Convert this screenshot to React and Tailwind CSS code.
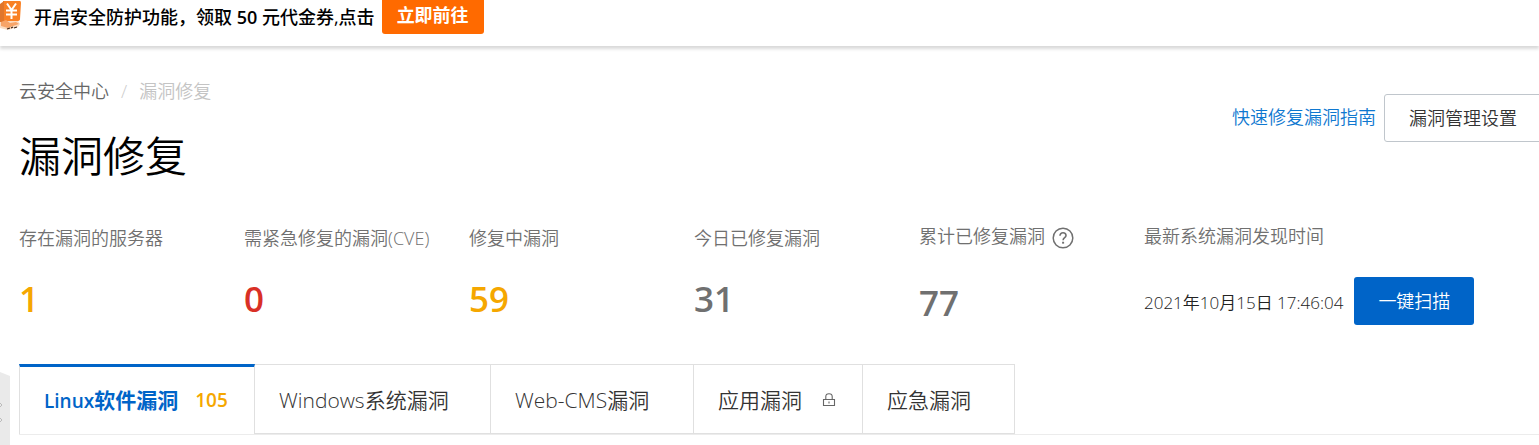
import { clsx } from "clsx";

const STATS = [
  { label: "存在漏洞的服务器", value: 1, tone: "text-[#f5a700]" },
  { label: "需紧急修复的漏洞(CVE)", value: 0, tone: "text-[#d93026]" },
  { label: "修复中漏洞", value: 59, tone: "text-[#f5a700]" },
  { label: "今日已修复漏洞", value: 31, tone: "text-[#707070]" },
];

const TABS = [
  { prefix: "Linux", label: "软件漏洞", count: 105, active: true, width: "w-[236px]" },
  { prefix: "Windows", label: "系统漏洞", width: "w-[236px]" },
  { prefix: "Web-CMS", label: "漏洞", width: "w-[203px]" },
  { label: "应用漏洞", locked: true, width: "w-[169px]" },
  { label: "应急漏洞", width: "w-[152px]" },
];

function CouponIcon() {
  return (
    <svg className="h-8 w-[22px] shrink-0" viewBox="0 0 22 32" aria-hidden="true">
      <path d="M0 20 L18 21 L20 24 L18 27 L8 30 L0 28 Z" fill="#fbdcc2" />
      <path d="M3 1 H20 Q21 1 21 3 L20 19 Q20 21 17 21 H3 Z" fill="#f98125" />
      <path d="M0 4 L4 1 V22 L0 22 Z" fill="#e0762c" />
      <path d="M1 22 L6 20 L10 23 L16 22 L19 24 L13 26 L8 28 L1 26 Z" fill="#f7a468" />
      <path d="M7 3.5 L11.5 10 L16 3.5 M11.5 9 V19 M6 10.5 H17 M6 14.5 H17" stroke="#fff" strokeWidth="2" fill="none" />
      <path d="M7 29 L10 28 M11 28 L13 27 M14 28 L17 27" stroke="#3c2415" strokeWidth="1.2" />
    </svg>
  );
}

function HelpIcon() {
  return (
    <svg className="h-[22px] w-[22px]" viewBox="0 0 22 22" fill="none" stroke="#707070" aria-hidden="true">
      <circle cx="11" cy="11" r="9.8" strokeWidth="1.5" />
      <path d="M8 8.8 C8 6.9 9.2 5.8 11 5.8 C12.8 5.8 14 6.9 14 8.5 C14 10.7 11.1 10.6 11.1 13.2" strokeWidth="1.6" />
      <path d="M10.1 15.7 H12.1" strokeWidth="1.9" />
    </svg>
  );
}

function LockIcon() {
  return (
    <svg className="h-4 w-[14px]" viewBox="0 0 14 16" fill="none" stroke="#666" strokeWidth="1.1" aria-label="未开通">
      <path d="M1.5 6.5 H12.5 V12.5 H1.5 Z" />
      <path d="M3.8 6.5 V3.5 C3.8 1.7 5 0.7 7 0.7 C9 0.7 10.2 1.7 10.2 3.5 V6.5 M7 8.5 V10.5" />
    </svg>
  );
}

function PromoBar() {
  return (
    <header className="flex h-[46px] items-start bg-white shadow-[0_3px_3px_0_rgba(0,0,0,0.15)]">
      <CouponIcon />
      <p className="ml-3 text-lg leading-[34px] font-medium text-black">
        开启安全防护功能，领取 <b className="font-semibold">50</b> 元代金券,点击
      </p>
      <button type="button" className="ml-[7px] h-[34px] rounded-b-[3px] bg-[#ff6a00] px-[15px] pb-1 text-lg leading-[30px] font-bold text-white">
        立即前往
      </button>
    </header>
  );
}

function PageHeader() {
  return (
    <div className="flex items-start justify-between">
      <div>
        <nav aria-label="面包屑" className="flex text-lg leading-6 font-[350] text-[#666]">
          <a href="#home">云安全中心</a>
          <span className="mx-3 text-[#ccc]">/</span>
          <span className="text-[#c4c4c4]">漏洞修复</span>
        </nav>
        <h1 className="mt-5 text-[42px] leading-[66px] font-[350] text-black">漏洞修复</h1>
      </div>
      <div className="-mr-[3px] flex items-center gap-2 pt-[15px]">
        <a href="#guide" className="pb-[2px] text-lg font-[350] text-[#0f78d0]">快速修复漏洞指南</a>
        <button type="button" className="h-12 rounded-[3px] border border-[#c0c6cc] px-6 text-lg font-[350] text-[#333]">
          漏洞管理设置
        </button>
      </div>
    </div>
  );
}

function StatRow() {
  const label = "flex items-center text-lg font-[350] whitespace-nowrap text-[#707070]";
  const value = "flex h-12 items-center text-[35px] font-semibold";
  return (
    <dl className="mt-[31px] grid grid-cols-[repeat(5,225px)_1fr]">
      {STATS.map((s) => (
        <div key={s.label}>
          <dt className={clsx(label, "h-9")}>{s.label}</dt>
          <dd className={clsx(value, "mt-[19px]", s.tone)}>{s.value}</dd>
        </div>
      ))}
      <div>
        <dt className={clsx(label, "h-8 gap-[7px]")}>
          累计已修复漏洞
          <button type="button" aria-label="说明" className="pt-1"><HelpIcon /></button>
        </dt>
        <dd className={clsx(value, "mt-[27px] text-[#707070]")}>77</dd>
      </div>
      <div>
        <dt className={clsx(label, "h-8")}>最新系统漏洞发现时间</dt>
        <dd className="mt-[25px] flex h-12 items-center gap-[11px] whitespace-nowrap">
          <time dateTime="2021-10-15T17:46:04" className="pt-1 text-[17px] font-[350] text-[#222]">
            2021年10月15日 17:46:04
          </time>
          <button type="button" className="h-12 rounded-[3px] bg-[#0064c8] px-6 text-lg font-[350] text-white">
            一键扫描
          </button>
        </dd>
      </div>
    </dl>
  );
}

function TabBar() {
  return (
    <div role="tablist" className="mt-[37px] flex h-[71px] border-b border-[#ececec]">
      {TABS.map((t) => (
        <button
          key={t.label}
          type="button"
          role="tab"
          aria-selected={Boolean(t.active)}
          className={clsx(
            "flex h-[70px] items-center border-r border-[#e0e0e0] pl-6 text-[21px] whitespace-nowrap",
            t.width,
            t.active
              ? "border-t-[3px] border-l border-t-[#0064c8] font-bold text-[#0064c8]"
              : "border-t border-b pt-[3px] font-[350] text-[#333]"
          )}
        >
          <span>
            {t.prefix && <span className={clsx(t.active && "text-[19px] font-semibold")}>{t.prefix}</span>}
            {t.label}
          </span>
          {t.count && <span className="ml-[17px] text-[19px] font-semibold text-[#f5a700]">{t.count}</span>}
          {t.locked && <span className="ml-5"><LockIcon /></span>}
        </button>
      ))}
    </div>
  );
}

export default function App() {
  return (
    <div className="relative min-h-screen overflow-hidden bg-white font-['Open_Sans','Noto_Sans_CJK_SC',sans-serif]">
      <PromoBar />
      <main className="pt-[33px] pl-[19px]">
        <PageHeader />
        <StatRow />
        <TabBar />
      </main>
      <button type="button" aria-label="展开菜单" className="absolute bottom-0 left-0">
        <svg className="h-[73px] w-[10px]" viewBox="0 0 10 73" aria-hidden="true">
          <path d="M0 0 L10 4 V73 H0 Z" fill="#eaeaea" />
          <path d="M0 31 L2 33 L0 35 M0 46 L2 48 L0 50" stroke="#bbb" fill="none" />
        </svg>
      </button>
    </div>
  );
}
